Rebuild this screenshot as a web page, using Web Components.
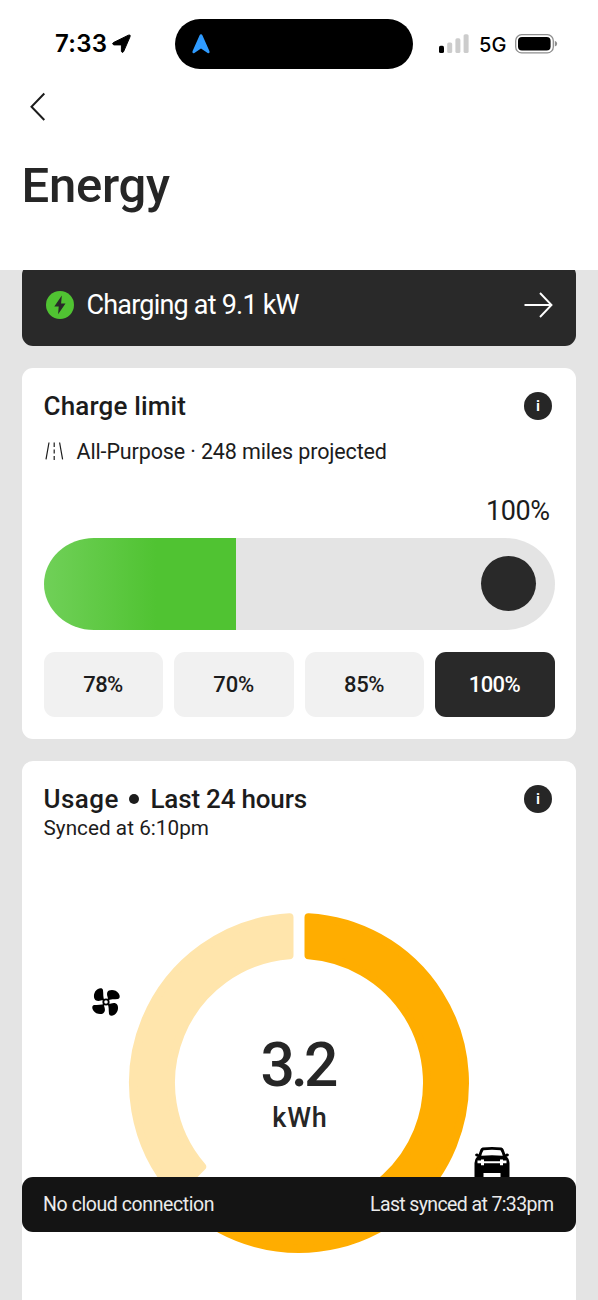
<!DOCTYPE html>
<html lang="en">
<head>
<meta charset="utf-8">
<title>Energy</title>
<style>
html, body { margin: 0; background: #e4e4e4; }
body { font-family: Roboto, "Liberation Sans", sans-serif; color: #1c1c1c; height: 1300px; overflow: hidden; }
</style>
</head>
<body>
<energy-app></energy-app>
<script>
const define = (name, html, setup) => {
  const t = document.createElement('template');
  t.innerHTML = html;
  customElements.define(name, class extends HTMLElement {
    connectedCallback() {
      if (this.shadowRoot) return;
      this.attachShadow({ mode: 'open' }).append(t.content.cloneNode(true));
      if (setup) setup(this, this.shadowRoot);
    }
  });
};

// A single line of type tracked to a given measure.
define('fit-text', `<style>:host{display:block;white-space:pre;flex:none}span{display:inline-block}</style><span><slot></slot></span>`,
(el, root) => {
  const span = root.querySelector('span');
  const n = el.textContent.length - 1;
  const target = parseFloat(el.getAttribute('width'));
  const ls = (target - span.getBoundingClientRect().width) / n;
  span.style.letterSpacing = ls + 'px';
  span.style.marginRight = -ls + 'px';
});

define('status-bar', `<style>
:host{display:grid;grid-template-columns:175px 238px 1fr;grid-template-rows:50px;height:50px;padding-top:19px;font-family:Inter,"Liberation Sans",sans-serif;color:#000}
.l{display:flex;align-items:center;padding-left:55px;gap:5px}
.l fit-text{font:600 24px/50px Inter,sans-serif}
.island{background:#000;border-radius:25px;display:flex;align-items:center;padding-left:17px}
.r{display:flex;align-items:center;padding-left:26px}
.r fit-text{font:500 20px/50px Inter,sans-serif;margin:1px 8px 0 10px}
svg{display:block;flex:none}
</style>
<div class="l"><fit-text width="52">7:33</fit-text><svg width="19" height="20" viewBox="0 0 19 20"><path stroke="#000" stroke-width="1" stroke-linejoin="round" d="M1.4 8.6 16.4 1.2Q18.9.2 18 2.8L11.6 17.6Q10.2 19.4 9.4 17.4V10.9H1.9Q-.4 10.2 1.4 8.6Z"/></svg></div>
<div class="island"><svg width="18" height="20" viewBox="0 0 18 20"><path fill="#2f9bff" d="M9 .3Q10 .3 10.5 1.5L17.5 17.2Q18 19.6 16 19.2L9 14.6 2 19.2Q0 19.6.5 17.2L7.5 1.5Q8 .3 9 .3Z"/></svg></div>
<div class="r"><svg width="30" height="20" viewBox="0 0 30 20"><rect y="11.8" width="5" height="7.2" rx="1.6"/><g fill="#ccc"><rect x="8.2" y="8.5" width="5" height="10.5" rx="1.6"/><rect x="16.4" y="4.3" width="5" height="14.7" rx="1.6"/><rect x="24.6" y=".2" width="5" height="18.8" rx="1.6"/></g></svg>
<fit-text width="27.5">5G</fit-text>
<svg width="43" height="20" viewBox="0 0 43 20"><rect x=".7" y=".7" width="37.6" height="18.2" rx="6" fill="none" stroke="#8e8e8e" stroke-width="1.3"/><rect x="3" y="3" width="32.6" height="13.6" rx="4"/><path fill="#8e8e8e" d="M39.8 6.8Q42.2 7.6 42.2 9.7T39.8 12.6Z"/></svg></div>`);

define('page-header', `<style>
:host{display:block;position:relative;z-index:1;height:270px;background:#fff;color:#262626}
svg{display:block;margin:23px 0 0 29px}
fit-text{font-size:49px;font-weight:500;line-height:60px;margin:34px 0 0 21.5px}
</style><status-bar></status-bar>
<svg width="18" height="30" viewBox="0 0 18 30"><path d="M15.3 1.5 2.5 14.7 15.3 28" fill="none" stroke="#1c1c1c" stroke-width="2"/></svg>
<fit-text width="148.5">Energy</fit-text>`);

define('charging-banner', `<style>
:host{display:flex;align-items:center;box-sizing:border-box;height:82px;margin-top:-6px;border-radius:11px;background:#292929;color:#fff;padding:0 23px 0 24px}
fit-text{font-size:27px;line-height:40px;margin-left:12.5px}
svg{display:block;flex:none}.a{margin-left:auto}
</style>
<svg width="28" height="28" viewBox="0 0 28 28"><circle cx="14" cy="14" r="14" fill="#50c332"/><path fill="#292929" d="M15.8 4.5 8.3 15.4H12.7L12.1 23.2 19.5 12.4H15.1Z"/></svg>
<fit-text width="213">Charging at 9.1 kW</fit-text>
<svg class="a" width="30" height="28" viewBox="0 0 30 28"><path d="M1.5 14H28M17 2 28.5 14 17 26" fill="none" stroke="#fff" stroke-width="1.9"/></svg>`);

define('info-dot', `<style>:host{display:grid;place-items:center;width:28px;height:28px;border-radius:50%;background:#262626;color:#fff;font-weight:600;font-size:15.5px;line-height:28px}</style>i`);

define('ui-card', `<style>
:host{display:block;box-sizing:border-box;border-radius:11px;background:#fff;padding:0 21.5px}
header{display:flex;align-items:center;height:28px;padding:24px 2.5px 0 0}
header info-dot{margin-left:auto}
</style><header><slot name="title"></slot><info-dot></info-dot></header><slot></slot>`);

define('charge-slider', `<style>
:host{display:flex;align-items:center;justify-content:flex-end;height:92px;border-radius:50px/46px;overflow:hidden;background:linear-gradient(90deg,#70d058 0,#50c332 112px,#50c332 192.5px,#e4e4e4 192.5px)}
i{width:55px;height:55px;border-radius:50%;background:#292929;margin-right:19px}
</style><i></i>`);

define('limit-option', `<style>
:host{display:grid;place-items:center;height:65px;box-sizing:border-box;padding-top:1.5px;border-radius:11px;background:#f1f1f1;font-weight:500;font-size:22px;line-height:30px}
:host([selected]){background:#292929;color:#fff}
</style><slot></slot>`);

define('usage-ring', `<style>
:host{display:grid;grid-template-columns:1fr 340px 1fr;height:340px}
svg{display:block;overflow:visible}
.ring{grid-area:1/2}
.c{grid-area:1/2;display:flex;flex-direction:column;align-items:center;padding:118px 0 0 1px;color:#262626;font-weight:500}
.c fit-text:first-child{font-size:60.5px;line-height:70px}
.c fit-text:last-child{font-size:27px;line-height:34px}
.fan{grid-area:1/1;margin:75.5px 0 0 69.5px}
.car{grid-area:1/3;margin:234px 0 0 5px}
</style>
<svg class="fan" width="29" height="29" viewBox="0 0 29 29"><defs><path id="b" d="M12.6 12.6C10.8 9.6 11.5 5.5 11 2.2 10.6-.1 8-.2 5.5 1.3 1.9 3.5 1.3 8.5 2.6 11 4 13.5 7 13.1 9 12.4 10.6 11.9 11.5 12.1 12.6 13.3Z"/></defs><use href="#b"/><use href="#b" transform="rotate(90 14 14)"/><use href="#b" transform="rotate(180 14 14)"/><use href="#b" transform="rotate(270 14 14)"/><circle cx="14" cy="14" r="3.6"/><circle cx="14" cy="14" r="1.8" fill="#fff"/></svg>
<svg class="ring" width="340" height="340" viewBox="-170 -170 340 340"></svg>
<div class="c"><fit-text width="78">3.2</fit-text><fit-text width="54.5">kWh</fit-text></div>
<svg class="car" width="36" height="38" viewBox="0 0 36 38"><path d="M8.6.6Q18-.7 27.4.6 29 1 29.6 2.6L31.4 7.5Q32 6.3 34 6.7 35.6 7.3 34.5 9 33.5 9.7 32.5 9.3 35.5 12 35.5 16V36H.5V16Q.5 12 3.5 9.3 2.5 9.7 1.5 9 .4 7.3 2 6.7 4 6.3 4.6 7.5L6.4 2.6Q7 1 8.6.6Z"/><path fill="#fff" d="M9.5 3.2Q18 2.1 26.5 3.2 28 5.5 28.7 8.7 18 7.7 7.3 8.7 8 5.5 9.5 3.2ZM3.5 13.5H7V12.6H10V14.3H26V12.6H29V13.5H32.5V16.3H29V18.3H26V16.3H10V18.3H7V16.3H3.5ZM9.5 26H26.5V30H9.5Z"/></svg>`,
(el, root) => {
  const svg = root.querySelector('.ring'), R = 166, r = 128, off = 9.5;
  const point = (radius, a, side) => {
    const t = a * Math.PI / 180 + side * Math.asin(off / radius);
    return (radius * Math.sin(t)).toFixed(2) + ' ' + (-radius * Math.cos(t)).toFixed(2);
  };
  for (const [a, b, color] of [[0, 224.2, '#ffad00'], [224.9, 360, '#ffe5ac']]) {
    const big = b - a > 180 ? 1 : 0;
    const p = document.createElementNS('http://www.w3.org/2000/svg', 'path');
    p.setAttribute('d', `M${point(R, a, 1)}A${R} ${R} 0 ${big} 1 ${point(R, b, -1)}L${point(r, b, -1)}A${r} ${r} 0 ${big} 0 ${point(r, a, 1)}Z`);
    p.setAttribute('fill', color); p.setAttribute('stroke', color);
    p.setAttribute('stroke-width', 8); p.setAttribute('stroke-linejoin', 'round');
    svg.append(p);
  }
});

define('sync-toast', `<style>
:host{position:absolute;z-index:2;left:22px;right:22px;top:1177px;height:55px;box-sizing:border-box;display:flex;align-items:center;justify-content:space-between;padding:0 22px 0 21px;background:#141414;border-radius:11px;color:#ebebeb;font-size:19.5px;line-height:30px}
</style><fit-text width="171.5">No cloud connection</fit-text><fit-text width="184">Last synced at 7:33pm</fit-text>`);

define('energy-app', `<style>
:host{display:block;position:relative;width:598px;height:1300px;overflow:hidden;background:#e4e4e4}
main{display:flex;flex-direction:column;gap:22px;padding:0 22px}
.limit{height:370.5px}.usage{height:620px}
.t{display:flex;align-items:center;font-size:26px;font-weight:500;line-height:30px}
.dot{width:10px;height:10px;border-radius:50%;background:#1c1c1c;margin:1px 12px 0 10px}
.mode{display:flex;align-items:center;height:30px;margin-top:16px;padding-left:1px;font-size:21.5px}
.mode fit-text{margin-left:13px}
.val{display:flex;justify-content:flex-end;font-size:27px;line-height:36px;margin-top:26.5px;padding-right:4.5px}
charge-slider{margin-top:9px}
.opts{display:grid;grid-template-columns:repeat(4,1fr);gap:11px;margin-top:22px}
.sync{font-size:20.7px;line-height:28px;margin-top:1px}
usage-ring{margin:71px -21.5px 0}
</style>
<page-header></page-header>
<main>
<charging-banner></charging-banner>
<ui-card class="limit">
<div slot="title" class="t"><fit-text width="142.5">Charge limit</fit-text></div>
<div class="mode"><svg width="19" height="18" viewBox="0 0 19 18"><path d="M4 .5 1 17.3M14.6.5 17.6 17.3M9.2.5V5M9.2 7.5V11.5M9.2 14V18" fill="none" stroke="#1c1c1c" stroke-width="1.2"/></svg><fit-text width="310.5">All-Purpose · 248 miles projected</fit-text></div>
<div class="val"><fit-text width="64">100%</fit-text></div>
<charge-slider></charge-slider>
<div class="opts">
<limit-option><fit-text width="40">78%</fit-text></limit-option>
<limit-option><fit-text width="41">70%</fit-text></limit-option>
<limit-option><fit-text width="40.5">85%</fit-text></limit-option>
<limit-option selected><fit-text width="52">100%</fit-text></limit-option>
</div>
</ui-card>
<ui-card class="usage">
<div slot="title" class="t"><fit-text width="75">Usage</fit-text><span class="dot"></span><fit-text width="156.5">Last 24 hours</fit-text></div>
<fit-text class="sync" width="165.5">Synced at 6:10pm</fit-text>
<usage-ring></usage-ring>
</ui-card>
</main>
<sync-toast></sync-toast>`);
</script>
</body>
</html>
